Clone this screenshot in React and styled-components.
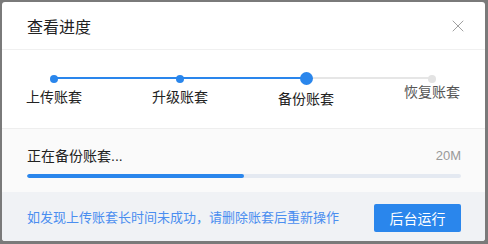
import React from "react";
import styled, { createGlobalStyle } from "styled-components";
import { X } from "lucide-react";

const steps = [
  { label: "上传账套", state: "done" },
  { label: "升级账套", state: "done" },
  { label: "备份账套", state: "active" },
  { label: "恢复账套", state: "todo" },
];

export default function App() {
  return (
    <>
      <GlobalStyle />
      <Frame>
        <Dialog>
          <Header>
            <Title>查看进度</Title>
            <CloseButton>
              <X size={20} strokeWidth={1.2} />
            </CloseButton>
          </Header>

          <Steps>
            {steps.map((s, i) => (
              <Step key={s.label} $state={s.state} $last={i === steps.length - 1} $next={steps[i + 1]?.state}>
                <DotRow>
                  <Dot $state={s.state} />
                </DotRow>
                <StepLabel $state={s.state}>{s.label}</StepLabel>
              </Step>
            ))}
          </Steps>

          <ProgressPanel>
            <ProgressHead>
              <span>正在备份账套...</span>
              <Size>20M</Size>
            </ProgressHead>
            <Bar>
              <Fill style={{ width: "50%" }} />
            </Bar>
          </ProgressPanel>

          <Footer>
            <Hint>如发现上传账套长时间未成功，请删除账套后重新操作</Hint>
            <PrimaryButton>后台运行</PrimaryButton>
          </Footer>
        </Dialog>
      </Frame>
    </>
  );
}

const GlobalStyle = createGlobalStyle`
  html, body {
    margin: 0;
    padding: 0;
    background: #7a7a7a;
  }
  body {
    font-family: "Liberation Sans", "Noto Sans CJK SC", sans-serif;
    color: #333;
  }
`;

const Frame = styled.div`
  width: 488px;
  height: 244px;
  box-sizing: border-box;
  padding: 2px 3px 3px 2px;
  background: #7a7a7a;
`;

const Dialog = styled.div`
  width: 483px;
  height: 239px;
  background: #fff;
  border-radius: 3px;
  overflow: hidden;
  display: flex;
  flex-direction: column;
`;

const Header = styled.div`
  height: 47px;
  flex: none;
  display: flex;
  align-items: center;
  justify-content: space-between;
  padding: 0 17px 0 25px;
  border-bottom: 1px solid #f0f0f0;
`;

const Title = styled.div`
  font-size: 16px;
  color: #222;
`;

const CloseButton = styled.div`
  color: #a0a0a0;
  display: flex;
  align-items: center;
`;

const Steps = styled.div`
  height: 78px;
  flex: none;
  display: grid;
  grid-template-columns: repeat(4, 126px);
  margin-left: -11px;
  padding-top: 22px;
  box-sizing: border-box;
`;

const Step = styled.div`
  position: relative;
  display: flex;
  flex-direction: column;
  align-items: center;

  &::before {
    content: "";
    display: ${(p) => (p.$last ? "none" : "block")};
    position: absolute;
    left: 50%;
    width: 100%;
    top: 5px;
    height: 2px;
    background: ${(p) => (p.$next === "todo" ? "#e6e6e6" : "#2a86ec")};
  }
`;

const DotRow = styled.div`
  height: 13px;
  display: flex;
  align-items: center;
  justify-content: center;
  position: relative;
  z-index: 1;
`;

const Dot = styled.div`
  width: ${(p) => (p.$state === "active" ? 13 : 8)}px;
  height: ${(p) => (p.$state === "active" ? 13 : 8)}px;
  border-radius: 50%;
  background: ${(p) => (p.$state === "todo" ? "#e3e3e3" : "#2a86ec")};
`;

const StepLabel = styled.div`
  font-size: 14px;
  line-height: 16px;
  margin-top: ${(p) => (p.$state === "active" ? 6 : p.$state === "todo" ? -1 : 4)}px;
  color: ${(p) => (p.$state === "todo" ? "#555" : "#222")};
`;

const ProgressPanel = styled.div`
  height: 64px;
  flex: none;
  box-sizing: border-box;
  background: #fafafa;
  border-top: 1px solid #eeeeee;
  padding: 19px 24px 0 25px;
`;

const ProgressHead = styled.div`
  display: flex;
  justify-content: space-between;
  align-items: center;
  font-size: 14px;
  line-height: 16px;
  color: #222;
`;

const Size = styled.span`
  color: #999;
  font-size: 13px;
`;

const Bar = styled.div`
  margin-top: 10px;
  height: 4px;
  border-radius: 2px;
  background: #e4e9f1;
  overflow: hidden;
`;

const Fill = styled.div`
  height: 100%;
  background: #2a86ec;
  border-radius: 2px;
`;

const Footer = styled.div`
  flex: 1;
  background: #f0f2f5;
  display: flex;
  align-items: center;
  justify-content: space-between;
  padding: 0 24px 0 25px;
`;

const Hint = styled.div`
  font-size: 13px;
  color: #4a8ef0;
`;

const PrimaryButton = styled.button`
  width: 87px;
  height: 28px;
  border: none;
  border-radius: 2px;
  background: #2a86ec;
  color: #fff;
  font-family: inherit;
  font-size: 14px;
  padding: 0;
  margin-top: 2px;
`;
